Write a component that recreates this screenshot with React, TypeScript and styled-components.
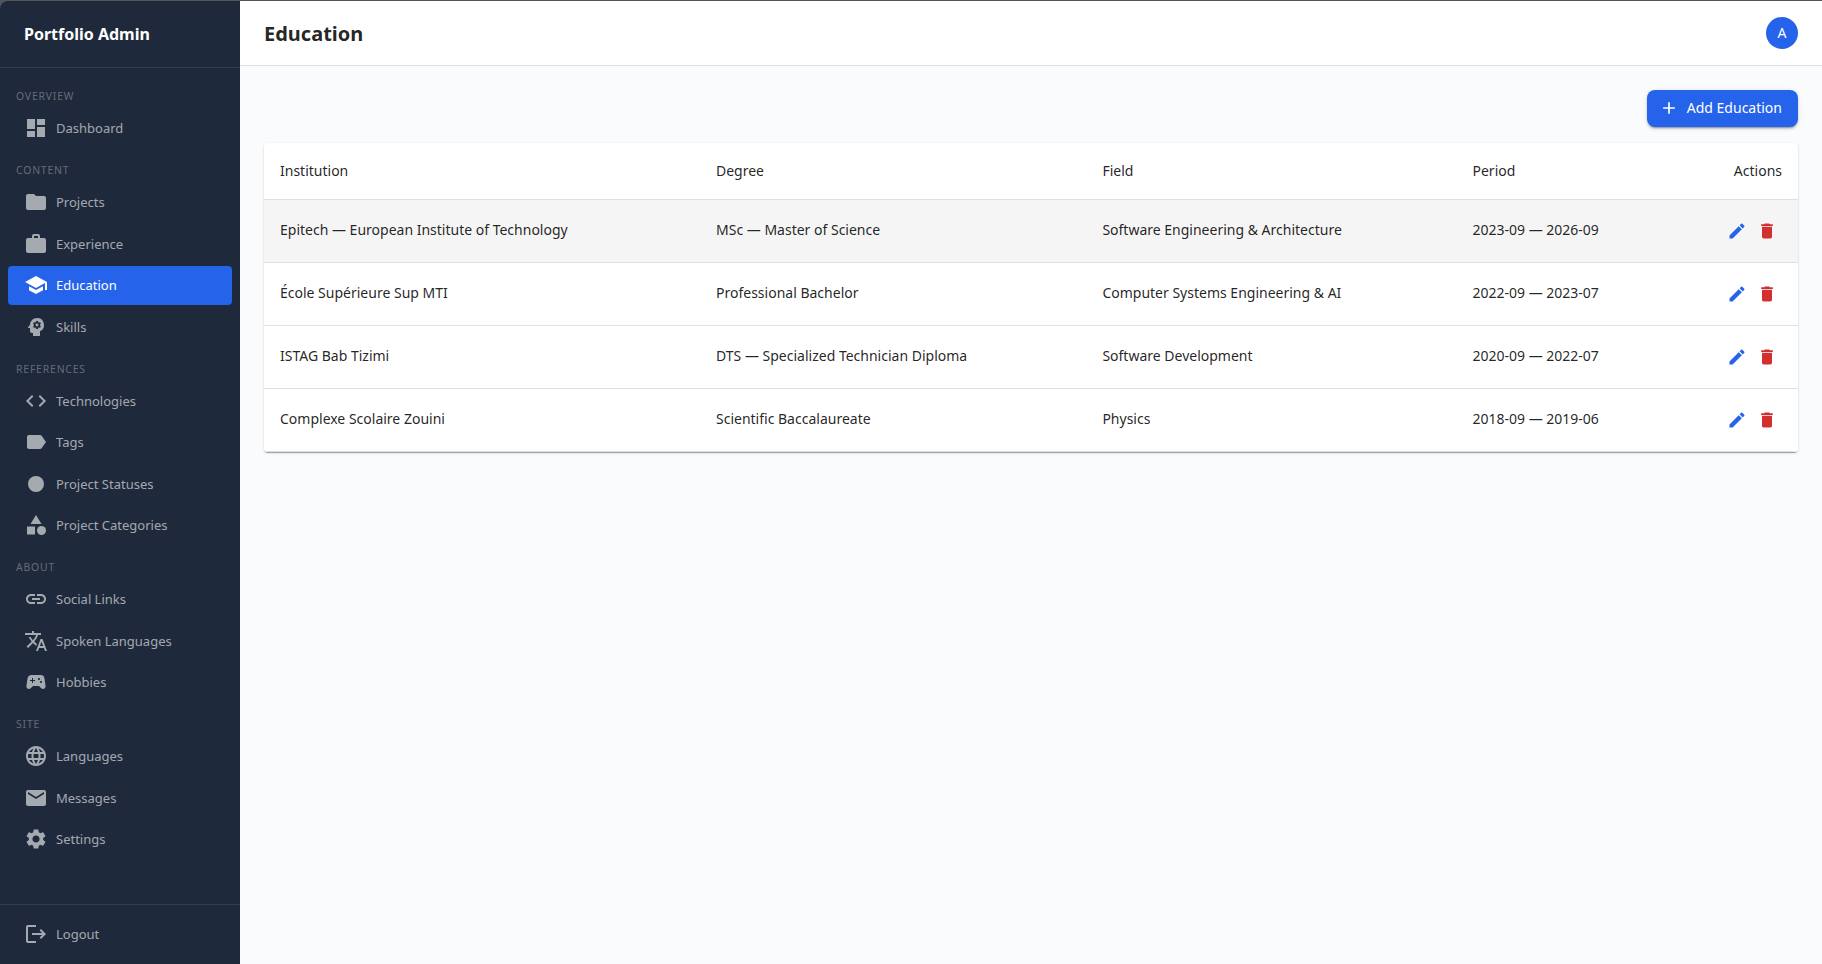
import React from "react";
import styled, { createGlobalStyle } from "styled-components";
import type { IconType } from "react-icons";
import {
  MdAdd,
  MdCategory,
  MdCode,
  MdDashboard,
  MdDelete,
  MdEdit,
  MdEmail,
  MdFiberManualRecord,
  MdFolder,
  MdLabel,
  MdLanguage,
  MdLink,
  MdLogout,
  MdPsychology,
  MdSchool,
  MdSettings,
  MdSportsEsports,
  MdTranslate,
  MdWork,
} from "react-icons/md";

const GlobalStyle = createGlobalStyle`
  *, *::before, *::after { box-sizing: border-box; }
  body {
    margin: 0;
    background: #555559;
    font-family: "Noto Sans", sans-serif;
    color: rgba(0, 0, 0, 0.87);
  }
`;

const Window = styled.div`
  display: flex;
  height: 100vh;
  padding-top: 1px;
  overflow: hidden;
`;

const Sidebar = styled.aside`
  display: flex;
  flex-direction: column;
  flex: 0 0 240px;
  background: #1e293b;
  border-top-left-radius: 8px;
`;

const Brand = styled.div`
  height: 67px;
  padding: 0 24px;
  border-bottom: 1px solid rgba(255, 255, 255, 0.1);
  color: #fff;
  font-size: 16px;
  font-weight: 700;
  line-height: 66px;
`;

const Nav = styled.nav`
  flex: 1;
  padding-top: 8px;
`;

const SectionLabel = styled.div`
  padding: 12px 16px 4px;
  color: rgba(255, 255, 255, 0.33);
  font-size: 10.4px;
  line-height: 16.5px;
  letter-spacing: 0.83px;
  text-transform: uppercase;
`;

const NavItem = styled.a<{ $active?: boolean }>`
  display: flex;
  align-items: center;
  gap: 8px;
  height: 39.5px;
  margin: 0 8px 2px;
  padding: 0 16px;
  border-radius: 4px;
  background: ${(p) => (p.$active ? "#2563eb" : "transparent")};
  color: ${(p) => (p.$active ? "#fff" : "rgba(255, 255, 255, 0.6)")};
  font-size: 13px;
  line-height: 19.5px;

  svg {
    flex: none;
    width: 24px;
    height: 24px;
  }
`;

const NavText = styled.span`
  padding-top: 1.2px;
`;

const SidebarFooter = styled.div`
  display: flex;
  flex-direction: column;
  justify-content: center;
  height: 60px;
  padding-top: 1.2px;
  border-top: 1px solid rgba(255, 255, 255, 0.1);
`;

const Main = styled.main`
  display: flex;
  flex: 1;
  flex-direction: column;
  min-width: 0;
  background: #f9fbfc;
`;

const TopBar = styled.header`
  display: flex;
  align-items: center;
  justify-content: space-between;
  height: 65px;
  padding: 0 24px;
  border-bottom: 1px solid #dedfe0;
  background: #fff;
`;

const PageTitle = styled.h1`
  margin: 0;
  padding-top: 2px;
  font-size: 20px;
  font-weight: 700;
  line-height: 32px;
`;

const Avatar = styled.div`
  width: 32px;
  height: 32px;
  border-radius: 50%;
  background: #2563eb;
  color: #fff;
  font-size: 14px;
  line-height: 32px;
  text-align: center;
`;

const Content = styled.div`
  display: flex;
  flex-direction: column;
  padding: 24px;
`;

const AddButton = styled.button`
  display: flex;
  align-items: center;
  align-self: flex-end;
  gap: 8px;
  height: 37px;
  margin-bottom: 16px;
  padding: 0 16px 1px 12px;
  border: 0;
  border-radius: 8px;
  background: #2563eb;
  box-shadow: 0 3px 1px -2px rgba(0, 0, 0, 0.2), 0 2px 2px rgba(0, 0, 0, 0.14),
    0 1px 5px rgba(0, 0, 0, 0.12);
  color: #fff;
  font: 400 14px/24px "Noto Sans", sans-serif;

  svg {
    width: 20px;
    height: 20px;
  }
`;

const TableCard = styled.div`
  overflow: hidden;
  border-radius: 4px;
  background: #fff;
  box-shadow: 0 2px 1px -1px rgba(0, 0, 0, 0.2), 0 1px 1px rgba(0, 0, 0, 0.14),
    0 1px 3px rgba(0, 0, 0, 0.12);
`;

const Table = styled.table`
  width: 100%;
  border-spacing: 0;
  table-layout: fixed;
  font-size: 14px;
  line-height: 20px;
`;

const Column = styled.col<{ $width?: number }>`
  width: ${(p) => (p.$width ? `${p.$width}px` : "auto")};
`;

const HeadCell = styled.th<{ $end?: boolean }>`
  height: 57px;
  padding: 0 16px;
  border-bottom: 1px solid #e0e0e0;
  font-weight: 400;
  text-align: ${(p) => (p.$end ? "right" : "left")};
`;

const Row = styled.tr<{ $hovered?: boolean }>`
  background: ${(p) => (p.$hovered ? "#f5f5f5" : "#fff")};
`;

const Cell = styled.td`
  height: 63px;
  padding: 0 16px;
  border-bottom: 1px solid #e0e0e0;
`;

const TextCell = styled(Cell)`
  padding-bottom: 2px;
`;

const Actions = styled.div`
  display: flex;
  justify-content: flex-end;
`;

const IconButton = styled.button<{ $danger?: boolean }>`
  display: flex;
  padding: 5px;
  border: 0;
  background: none;
  color: ${(p) => (p.$danger ? "#d32f2f" : "#2563eb")};

  svg {
    width: 20px;
    height: 20px;
  }
`;

const sections: { label: string; items: [string, IconType][] }[] = [
  { label: "Overview", items: [["Dashboard", MdDashboard]] },
  {
    label: "Content",
    items: [
      ["Projects", MdFolder],
      ["Experience", MdWork],
      ["Education", MdSchool],
      ["Skills", MdPsychology],
    ],
  },
  {
    label: "References",
    items: [
      ["Technologies", MdCode],
      ["Tags", MdLabel],
      ["Project Statuses", MdFiberManualRecord],
      ["Project Categories", MdCategory],
    ],
  },
  {
    label: "About",
    items: [
      ["Social Links", MdLink],
      ["Spoken Languages", MdTranslate],
      ["Hobbies", MdSportsEsports],
    ],
  },
  {
    label: "Site",
    items: [
      ["Languages", MdLanguage],
      ["Messages", MdEmail],
      ["Settings", MdSettings],
    ],
  },
];

const rows = [
  ["Epitech — European Institute of Technology", "MSc — Master of Science", "Software Engineering & Architecture", "2023-09 — 2026-09"],
  ["École Supérieure Sup MTI", "Professional Bachelor", "Computer Systems Engineering & AI", "2022-09 — 2023-07"],
  ["ISTAG Bab Tizimi", "DTS — Specialized Technician Diploma", "Software Development", "2020-09 — 2022-07"],
  ["Complexe Scolaire Zouini", "Scientific Baccalaureate", "Physics", "2018-09 — 2019-06"],
];

export default function App() {
  return (
    <>
      <GlobalStyle />
      <Window>
        <Sidebar>
          <Brand>Portfolio Admin</Brand>
          <Nav>
            {sections.map((section) => (
              <React.Fragment key={section.label}>
                <SectionLabel>{section.label}</SectionLabel>
                {section.items.map(([name, Icon]) => (
                  <NavItem key={name} $active={name === "Education"}>
                    <Icon />
                    <NavText>{name}</NavText>
                  </NavItem>
                ))}
              </React.Fragment>
            ))}
          </Nav>
          <SidebarFooter>
            <NavItem>
              <MdLogout />
              <NavText>Logout</NavText>
            </NavItem>
          </SidebarFooter>
        </Sidebar>
        <Main>
          <TopBar>
            <PageTitle>Education</PageTitle>
            <Avatar>A</Avatar>
          </TopBar>
          <Content>
            <AddButton>
              <MdAdd />
              Add Education
            </AddButton>
            <TableCard>
              <Table>
                <colgroup>
                  <Column $width={436} />
                  <Column $width={386.4} />
                  <Column $width={370.1} />
                  <Column $width={215} />
                  <Column />
                </colgroup>
                <thead>
                  <tr>
                    <HeadCell>Institution</HeadCell>
                    <HeadCell>Degree</HeadCell>
                    <HeadCell>Field</HeadCell>
                    <HeadCell>Period</HeadCell>
                    <HeadCell $end>Actions</HeadCell>
                  </tr>
                </thead>
                <tbody>
                  {rows.map((row, index) => (
                    <Row key={row[0]} $hovered={index === 0}>
                      {row.map((text) => (
                        <TextCell key={text}>{text}</TextCell>
                      ))}
                      <Cell>
                        <Actions>
                          <IconButton aria-label="Edit">
                            <MdEdit />
                          </IconButton>
                          <IconButton $danger aria-label="Delete">
                            <MdDelete />
                          </IconButton>
                        </Actions>
                      </Cell>
                    </Row>
                  ))}
                </tbody>
              </Table>
            </TableCard>
          </Content>
        </Main>
      </Window>
    </>
  );
}
